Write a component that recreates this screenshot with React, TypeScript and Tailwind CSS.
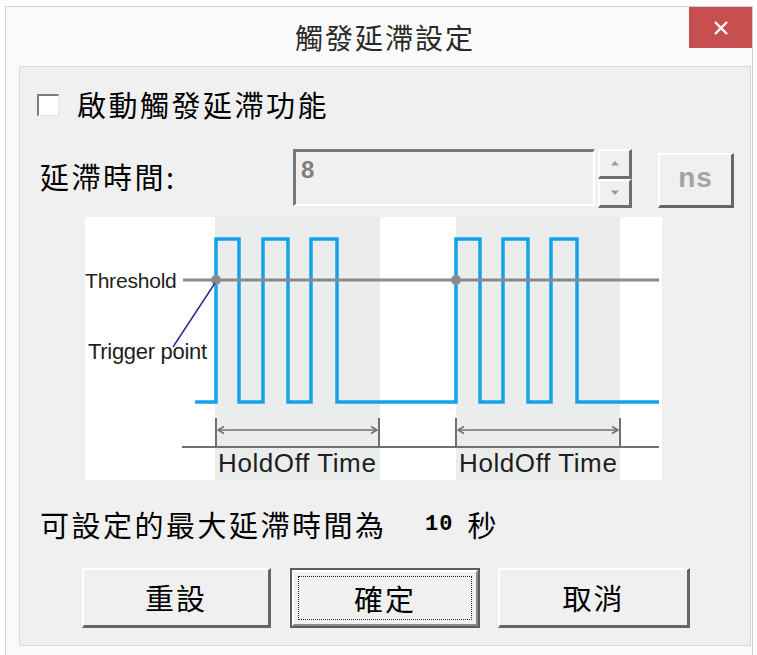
const cjk = "font-['Noto_Sans_CJK_TC','Noto_Sans_CJK_SC',sans-serif]";

function Checkbox() {
  return (
    <span className="block h-[22px] w-[22px] border-t-2 border-l-2 border-t-[#7c7c7c] border-l-[#7c7c7c] border-r border-b border-r-[#e4e4e4] border-b-[#e4e4e4] bg-white" />
  );
}

function SpinButton({ dir }: { dir: "up" | "down" }) {
  return (
    <div className="flex flex-1 items-center justify-center border-t-2 border-l-2 border-t-white border-l-white border-r-[3px] border-b-[3px] border-r-[#6e6e6e] border-b-[#6e6e6e] bg-[#f0f0f0]">
      <svg width="10" height="6" viewBox="0 0 10 6">
        {dir === "up" ? (
          <polygon points="1,5.5 9,5.5 5,1" fill="#9a9a9a" />
        ) : (
          <polygon points="1,0.5 9,0.5 5,5" fill="#9a9a9a" />
        )}
      </svg>
    </div>
  );
}

function RaisedButton({
  label,
  width,
  isDefault,
}: {
  label: string;
  width: string;
  isDefault?: boolean;
}) {
  if (isDefault) {
    return (
      <div className={`${width} h-[60px] border-2 border-[#5e5e5e] bg-[#f0f0f0]`}>
        <div className="flex h-full w-full border-t-2 border-l-2 border-t-white border-l-white border-r-2 border-b-2 border-r-[#8a8a8a] border-b-[#8a8a8a] p-[4px]">
          <div
            className={`flex flex-1 items-center justify-center border border-dotted border-[#222] text-[29px] leading-none tracking-[2px] text-black ${cjk}`}
          >
            {label}
          </div>
        </div>
      </div>
    );
  }
  return (
    <div
      className={`${width} flex h-[60px] items-center justify-center border-t-2 border-l-2 border-t-white border-l-white border-r-[3px] border-b-[3px] border-r-[#666] border-b-[#666] bg-[#f0f0f0] text-[29px] leading-none tracking-[2px] text-black ${cjk}`}
    >
      {label}
    </div>
  );
}

function HoldOffDiagram() {
  const wave =
    "M110 185 H131 V22 H154 V185 H178 V22 H203 V185 H226 V22 H252 V185 H371 V22 H395 V185 H418 V22 H443 V185 H466 V22 H492 V185 H574";
  const textFont = "'Liberation Sans', Arial, sans-serif";
  return (
    <svg width="577" height="263" viewBox="0 0 577 263" className="block">
      <rect width="577" height="263" fill="#ffffff" />
      <rect x="130" width="165" height="263" fill="#ebecec" />
      <rect x="371" width="164" height="263" fill="#ebecec" />
      <path d={wave} fill="none" stroke="#14a2e8" strokeWidth="3.5" />
      <line x1="98" y1="63" x2="574" y2="63" stroke="#8a8a8a" strokeWidth="3" />
      <circle cx="131" cy="63" r="5" fill="#8a8a8a" />
      <circle cx="371" cy="63" r="5" fill="#8a8a8a" />
      <line x1="130" y1="66" x2="88" y2="130" stroke="#2b2b96" strokeWidth="1.5" />
      <text x="0" y="71" fontFamily={textFont} fontSize="21" fill="#1e1e1e" letterSpacing="-0.2">
        Threshold
      </text>
      <text x="3" y="142" fontFamily={textFont} fontSize="22" fill="#1e1e1e" letterSpacing="-0.3">
        Trigger point
      </text>
      <g stroke="#707070" fill="none">
        <line x1="97" y1="230" x2="574" y2="230" strokeWidth="1.8" />
        <line x1="131" y1="201" x2="131" y2="230" strokeWidth="2" />
        <line x1="294" y1="201" x2="294" y2="230" strokeWidth="2" />
        <line x1="371" y1="201" x2="371" y2="230" strokeWidth="2" />
        <line x1="535" y1="201" x2="535" y2="230" strokeWidth="2" />
        <line x1="133" y1="213" x2="292" y2="213" strokeWidth="1.5" />
        <line x1="373" y1="213" x2="533" y2="213" strokeWidth="1.5" />
        <polyline points="139,209.5 133,213 139,216.5" strokeWidth="1.5" />
        <polyline points="286,209.5 292,213 286,216.5" strokeWidth="1.5" />
        <polyline points="379,209.5 373,213 379,216.5" strokeWidth="1.5" />
        <polyline points="527,209.5 533,213 527,216.5" strokeWidth="1.5" />
      </g>
      <text x="133" y="255" fontFamily={textFont} fontSize="26" fill="#1e1e1e" letterSpacing="0.6">
        HoldOff Time
      </text>
      <text x="374" y="255" fontFamily={textFont} fontSize="26" fill="#1e1e1e" letterSpacing="0.6">
        HoldOff Time
      </text>
    </svg>
  );
}

export default function App() {
  return (
    <div className="h-[655px] w-[757px] overflow-hidden bg-white pt-[6px] pl-[5px]">
      <div className="flex h-[660px] w-[748px] flex-col border-t border-l border-r border-[#d2d2d2] bg-[#fafafa]">
        {/* title bar */}
        <div className="grid h-[59px] grid-cols-[1fr_auto_1fr]">
          <div />
          <div className={`mt-[16px] pl-[12px] text-[28px] leading-none tracking-[2px] text-[#2a2a2a] ${cjk}`}>
            觸發延滯設定
          </div>
          <div className="flex justify-end">
            <button
              type="button"
              className="flex h-[41px] w-[63px] items-center justify-center bg-[#c84f4f]"
            >
              <svg width="16" height="14" viewBox="0 0 16 14">
                <path d="M2 1 L14 13 M14 1 L2 13" stroke="#fff" strokeWidth="2.4" />
              </svg>
            </button>
          </div>
        </div>

        {/* client area */}
        <div className="ml-[13px] flex h-[580px] w-[732px] flex-col border border-[#dadada] bg-[#f0f0f0]">
          <div className="mt-[23px] ml-[17px] flex items-center gap-[18px]">
            <Checkbox />
            <span className={`text-[29px] leading-none tracking-[2.5px] text-black ${cjk}`}>
              啟動觸發延滯功能
            </span>
          </div>

          <div className="mt-[30px] ml-[20px] flex items-start">
            <span className={`mt-[13px] w-[253px] text-[29px] leading-none tracking-[2.5px] text-black ${cjk}`}>
              延滯時間:
            </span>
            <div className="h-[57px] w-[302px] border-t-[3px] border-l-[3px] border-t-[#777] border-l-[#777] border-r-2 border-b-2 border-r-white border-b-white bg-[#f0f0f0] pt-[6px] pl-[5px]">
              <span className="font-['Liberation_Sans',Arial,sans-serif] text-[24px] leading-none font-bold text-[#808080]">
                8
              </span>
            </div>
            <div className="ml-[3px] flex h-[59px] w-[34px] flex-col">
              <SpinButton dir="up" />
              <SpinButton dir="down" />
            </div>
            <div className="mt-[4px] ml-[26px] flex h-[55px] w-[76px] items-center justify-center border-t-2 border-l-2 border-t-white border-l-white border-r-[3px] border-b-[3px] border-r-[#666] border-b-[#666] pb-[4px] font-['Liberation_Sans',Arial,sans-serif] text-[28px] leading-none font-bold tracking-[1px] text-[#a4a4a4]">
              ns
            </div>
          </div>

          <div className="mt-[9px] ml-[65px]">
            <HoldOffDiagram />
          </div>

          <div className="mt-[30px] ml-[20px] flex items-center">
            <span className={`w-[385px] text-[29px] leading-none tracking-[2.5px] text-black ${cjk}`}>
              可設定的最大延滯時間為
            </span>
            <span className="font-['Liberation_Mono',monospace] text-[22px] leading-none font-bold tracking-[1px] text-black">
              10
            </span>
            <span className={`ml-[14px] text-[29px] leading-none text-black ${cjk}`}>秒</span>
          </div>

          <div className="mt-[29px] ml-[62px] flex">
            <RaisedButton label="重設" width="w-[189px]" />
            <div className="ml-[19px]">
              <RaisedButton label="確定" width="w-[190px]" isDefault />
            </div>
            <div className="ml-[18px]">
              <RaisedButton label="取消" width="w-[192px]" />
            </div>
          </div>
        </div>
      </div>
    </div>
  );
}
